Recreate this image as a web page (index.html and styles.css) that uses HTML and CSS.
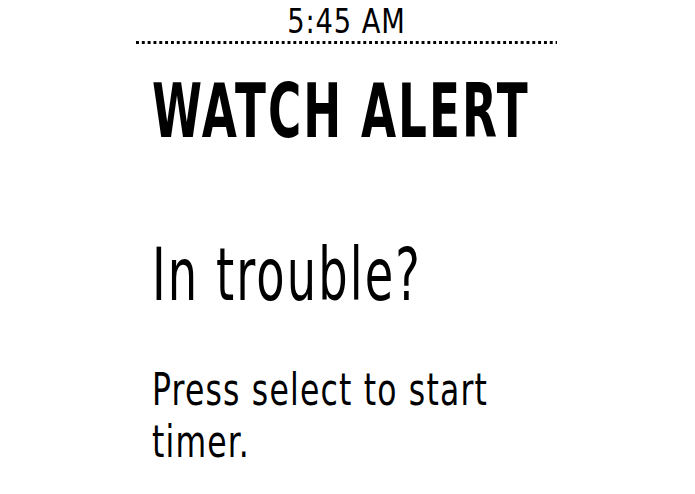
FILE: index.html
```html
<!DOCTYPE html>
<html>
<head>
<meta charset="utf-8">
<link rel="stylesheet" href="styles.css">
</head>
<body>
<div class="screen">
  <div class="status"><span class="time">5:45 AM</span></div>
  <div class="divider"></div>
  <div class="content">
    <h1 class="title"><span class="sq sq-title">WATCH ALERT</span></h1>
    <h2 class="question"><span class="sq sq-question">In trouble?</span></h2>
    <p class="body"><span class="sq sq-body">Press select to start<br>timer.</span></p>
  </div>
</div>
</body>
</html>
```
FILE: styles.css
```css
html, body {
  margin: 0;
  padding: 0;
  background: #fff;
}
body {
  width: 695px;
  height: 494px;
  overflow: hidden;
  font-family: "DejaVu Sans Condensed", "DejaVu Sans", sans-serif;
  color: #000;
}
.screen {
  margin-left: 136px;
  width: 421px;
}
.status {
  padding-top: 7px;
  height: 30px;
  line-height: 30px;
  font-size: 33px;
  text-align: center;
}
.time {
  display: inline-block;
  transform: scaleX(0.92);
  letter-spacing: 1px;
  transform-origin: center top;
}
.divider {
  margin-top: 4px;
  height: 3px;
  background-image: linear-gradient(to right, #000 0, #000 3px, transparent 3px);
  background-size: 5.84px 3px;
  background-repeat: repeat-x;
}
.content {
  padding-left: 16px;
}
.title, .question, .body {
  margin: 0;
  font-weight: normal;
  white-space: nowrap;
}
.sq {
  display: inline-block;
  transform-origin: left top;
}
.title {
  margin-top: 32px;
  font-size: 75px;
  line-height: 70px;
  font-weight: bold;
}
.sq-title { transform: scaleX(0.672); letter-spacing: 3px; }
.question {
  margin-top: 94px;
  font-size: 73px;
  line-height: 70px;
}
.sq-question { transform: scaleX(0.705); letter-spacing: 3px; }
.body {
  margin-top: 54px;
  font-size: 44px;
  line-height: 52px;
}
.sq-body { transform: scaleX(0.795); letter-spacing: 1.5px; }
```
